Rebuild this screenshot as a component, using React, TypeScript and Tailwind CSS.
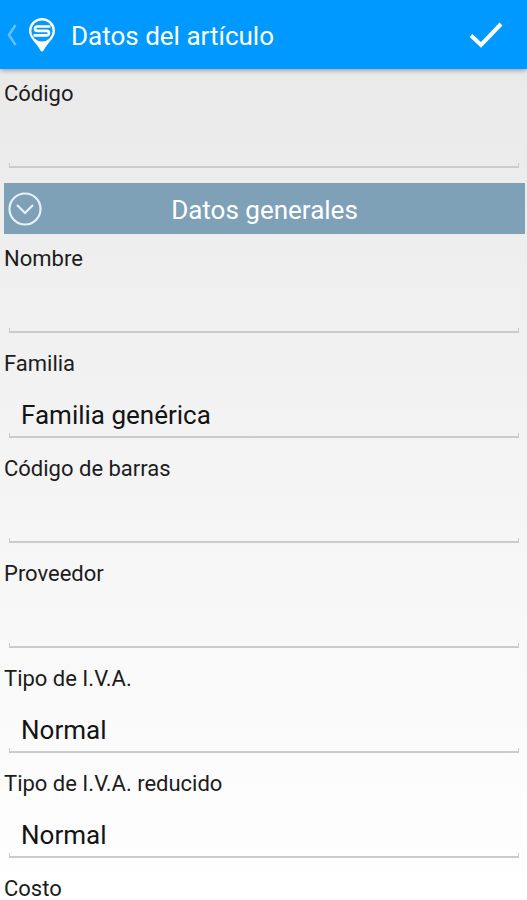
import { useState } from "react";

type FieldProps = { id: string; label: string; initial?: string };

function Field({ id, label, initial = "" }: FieldProps) {
  const [value, setValue] = useState(initial);
  return (
    <div>
      <label htmlFor={id} className="block px-1 text-[22px] leading-6 text-[#1c1c1c]">
        {label}
      </label>
      <div className="mt-[17px] ml-[9px] mr-2">
        <input
          id={id}
          type="text"
          value={value}
          onChange={(e) => setValue(e.target.value)}
          className="block h-10 w-full bg-transparent px-3 pt-1 text-[26px] leading-8 text-[#141414] outline-none"
        />
        <div className="h-[5px] border-x border-b-2 border-[#cbcbcb]" />
      </div>
    </div>
  );
}

function PinLogo() {
  return (
    <svg viewBox="0 0 28 36" className="h-9 w-7 shrink-0" aria-hidden="true">
      <path d="M14 1a13 13 0 0 0-13 13c0 7 8 12.500 11.500 19.500Q14 35.500 15.500 33.500C19 26.500 27 21 27 14A13 13 0 0 0 14 1z" fill="#fff" />
      <circle cx="14" cy="14" r="10.600" fill="#0a98fb" />
      <path d="M22.500 9.500H9.500Q7 9.500 7 11.700T9.500 13.900H18.500Q21 13.900 21 16.100T18.500 18.300H5.500" fill="none" stroke="#fff" strokeWidth="2.700" />
    </svg>
  );
}

export default function App() {
  const [open, setOpen] = useState(true);
  return (
    <div className="flex h-screen flex-col bg-linear-to-b from-[#e8e8e8] to-white font-[Roboto,sans-serif]">
      <header className="relative flex h-[69px] shrink-0 items-center bg-[#0099ff] text-white shadow-[0_1px_5px_rgba(0,0,0,0.4)]">
        <button type="button" aria-label="Volver" className="flex items-center gap-[11px] pl-[7px]">
          <svg viewBox="0 0 10 22" className="h-[22px] w-[10px]" fill="none" stroke="#62c0ff" strokeWidth="2.500" aria-hidden="true">
            <path d="M8.500 1 2 11l6.500 10" />
          </svg>
          <PinLogo />
        </button>
        <h1 className="ml-[15px] flex-1 pt-[3px] text-[26px] leading-8">Datos del artículo</h1>
        <button type="button" aria-label="Guardar" className="mr-6">
          <svg viewBox="0 0 34 26" className="h-[26px] w-[34px]" fill="none" stroke="#fff" strokeWidth="4" aria-hidden="true">
            <path d="M2 13.500 12 23 32 2" />
          </svg>
        </button>
      </header>

      <form
        className="min-h-0 flex-1 overflow-y-auto pt-[13px] [scrollbar-width:none]"
        onSubmit={(e) => e.preventDefault()}
      >
        <Field id="codigo" label="Código" />
        <div className="mt-[15px] mr-[2px] ml-1">
          <button
            type="button"
            aria-expanded={open}
            onClick={() => setOpen(!open)}
            className="grid h-[51px] w-full grid-cols-[36px_1fr_36px] items-center bg-[#7ea1b8] px-[3px] text-[26px] leading-8 text-white"
          >
            <svg viewBox="0 0 36 36" className="h-9 w-9" fill="none" stroke="#e6f1fb" strokeWidth="2.200" aria-hidden="true">
              <circle cx="18" cy="18" r="15.500" />
              <path d="m10 14 8 8 8-8" />
            </svg>
            <span className="pt-[2px]">Datos generales</span>
          </button>
        </div>
        {open && (
          <div className="mt-[13px] flex flex-col gap-[19px]">
            <Field id="nombre" label="Nombre" />
            <Field id="familia" label="Familia" initial="Familia genérica" />
            <Field id="barras" label="Código de barras" />
            <Field id="proveedor" label="Proveedor" />
            <Field id="iva" label="Tipo de I.V.A." initial="Normal" />
            <Field id="iva-reducido" label="Tipo de I.V.A. reducido" initial="Normal" />
            <Field id="costo" label="Costo" />
          </div>
        )}
      </form>
    </div>
  );
}
